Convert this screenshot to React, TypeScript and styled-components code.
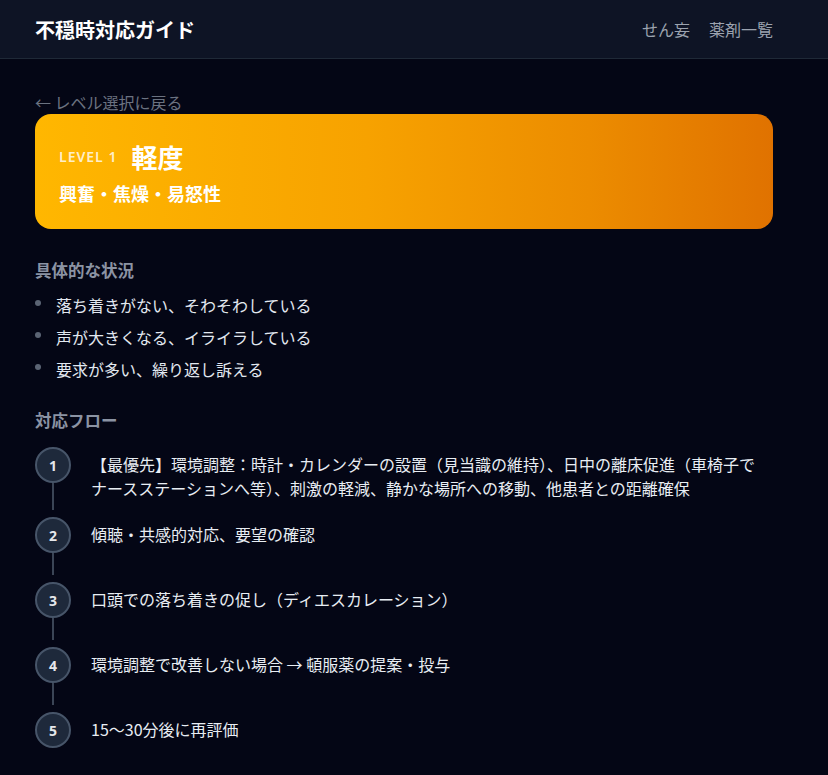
import React from 'react'
import styled, { createGlobalStyle } from 'styled-components'

const GlobalStyle = createGlobalStyle`
  html, body {
    margin: 0;
    padding: 0;
    background: #040615;
  }
  body {
    font-family: "Noto Sans CJK JP", "Noto Sans", sans-serif;
    color: #e2e8f0;
  }
  * { box-sizing: border-box; }
`

const Page = styled.div`
  min-height: 775px;
  background: #040615;
`

const Header = styled.header`
  height: 59px;
  background: #0e1425;
  border-bottom: 1px solid #1f2937;
  display: flex;
  align-items: center;
  justify-content: space-between;
  padding: 0 55px 0 35px;
`

const Title = styled.h1`
  margin: 0;
  font-size: 20px;
  font-weight: 700;
  color: #ffffff;
`

const Nav = styled.nav`
  display: flex;
  gap: 19px;
`

const NavLink = styled.a`
  font-size: 16px;
  color: #9ca3af;
  text-decoration: none;
`

const Main = styled.main`
  padding: 33px 55px 0 35px;
`

const BackLink = styled.a`
  display: block;
  font-size: 16px;
  line-height: 20px;
  color: #6b7280;
  text-decoration: none;
  margin-bottom: 2px;
`

const LevelCard = styled.section`
  border-radius: 16px;
  padding: 26px 24px 24px;
  background: linear-gradient(90deg, #ffb700 0%, #f7a200 45%, #ec8c00 75%, #e07200 100%);
  color: #ffffff;
`

const LevelRow = styled.div`
  display: flex;
  align-items: center;
  gap: 14px;
  height: 32px;
`

const LevelTag = styled.span`
  font-family: "Noto Sans", sans-serif;
  font-size: 14px;
  font-weight: 600;
  letter-spacing: 1px;
  color: rgba(255, 255, 255, 0.8);
`

const LevelName = styled.span`
  font-size: 26px;
  font-weight: 700;
`

const LevelSub = styled.div`
  margin-top: 9px;
  font-size: 18px;
  line-height: 24px;
  font-weight: 700;
`

const SectionTitle = styled.h2<{ $top: number }>`
  margin: ${({ $top }) => $top}px 0 0;
  font-size: 16.5px;
  line-height: 24px;
  font-weight: 700;
  color: #8b93a3;
`

const BulletList = styled.ul`
  list-style: none;
  margin: 11px 0 0;
  padding: 0;
  display: flex;
  flex-direction: column;
  gap: 8px;
`

const BulletItem = styled.li`
  display: flex;
  align-items: center;
  gap: 15px;
  font-size: 16px;
  line-height: 24px;
  color: #e2e8f0;

  &::before {
    content: '';
    width: 6px;
    height: 6px;
    border-radius: 50%;
    background: #5b6474;
    margin-top: -4px;
    flex-shrink: 0;
  }
`

const Flow = styled.ol`
  list-style: none;
  margin: 15px 0 0;
  padding: 0;
  display: flex;
  flex-direction: column;
  gap: 7px;
`

const Step = styled.li`
  display: flex;
  gap: 20px;
`

const Rail = styled.div`
  display: flex;
  flex-direction: column;
  align-items: center;
  width: 36px;
  flex-shrink: 0;
`

const Circle = styled.div`
  width: 36px;
  height: 36px;
  border-radius: 50%;
  background: #1e293b;
  border: 2px solid #475569;
  display: flex;
  align-items: center;
  justify-content: center;
  font-family: "Noto Sans", sans-serif;
  font-size: 14px;
  font-weight: 700;
  color: #e5e7eb;
`

const Line = styled.div`
  width: 2px;
  flex: 1;
  min-height: 22px;
  background: #3b4556;
`

const StepText = styled.div`
  padding: 5px 12px 10px 0;
  font-size: 16px;
  line-height: 24px;
  color: #e8edf3;
`

const situations = [
  '落ち着きがない、そわそわしている',
  '声が大きくなる、イライラしている',
  '要求が多い、繰り返し訴える',
]

const steps = [
  '【最優先】環境調整：時計・カレンダーの設置（見当識の維持）、日中の離床促進（車椅子でナースステーションへ等）、刺激の軽減、静かな場所への移動、他患者との距離確保',
  '傾聴・共感的対応、要望の確認',
  '口頭での落ち着きの促し（ディエスカレーション）',
  '環境調整で改善しない場合 → 頓服薬の提案・投与',
  '15〜30分後に再評価',
]

const App: React.FC = () => {
  return (
    <Page>
      <GlobalStyle />
      <Header>
        <Title>不穏時対応ガイド</Title>
        <Nav>
          <NavLink href="#">せん妄</NavLink>
          <NavLink href="#">薬剤一覧</NavLink>
        </Nav>
      </Header>

      <Main>
        <BackLink href="#">← レベル選択に戻る</BackLink>

        <LevelCard>
          <LevelRow>
            <LevelTag>LEVEL 1</LevelTag>
            <LevelName>軽度</LevelName>
          </LevelRow>
          <LevelSub>興奮・焦燥・易怒性</LevelSub>
        </LevelCard>

        <SectionTitle $top={29}>具体的な状況</SectionTitle>
        <BulletList>
          {situations.map((s) => (
            <BulletItem key={s}>{s}</BulletItem>
          ))}
        </BulletList>

        <SectionTitle $top={27}>対応フロー</SectionTitle>
        <Flow>
          {steps.map((s, i) => (
            <Step key={i}>
              <Rail>
                <Circle>{i + 1}</Circle>
                {i < steps.length - 1 && <Line />}
              </Rail>
              <StepText>{s}</StepText>
            </Step>
          ))}
        </Flow>
      </Main>
    </Page>
  )
}

export default App
